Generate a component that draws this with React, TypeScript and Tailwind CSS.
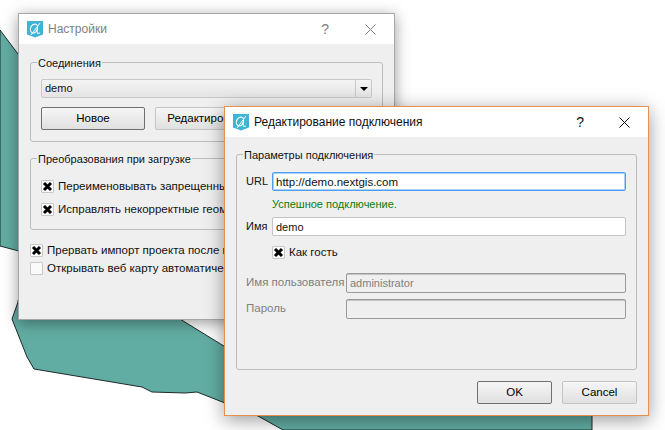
import React from 'react'

const FONT = "font-['Liberation_Sans',sans-serif]"

const Logo = () => (
  <svg width="16" height="17" viewBox="0 0 16 17">
    <path d="M0 0H16V13.5L8 16.5L0 13.5Z" fill="#3fb4d6" />
    <ellipse cx="7" cy="7.5" rx="3.4" ry="4.6" transform="rotate(25 7 7.5)" fill="none" stroke="#fff" strokeWidth="1.1" />
    <path d="M4 14L13 2M10.5 6C10 9 10 11 10.5 12.5L13 12" fill="none" stroke="#fff" strokeWidth="1" />
  </svg>
)

const CloseIcon = ({ color }: { color: string }) => (
  <svg width="11" height="11" viewBox="0 0 11 11">
    <path d="M0.5 0.5L10.5 10.5M10.5 0.5L0.5 10.5" stroke={color} strokeWidth="1" />
  </svg>
)

const Check = ({ checked = true }: { checked?: boolean }) => (
  <span className="flex h-[13px] w-[13px] shrink-0 items-center justify-center rounded-[1px] border border-[#c8c8c8] bg-[#fafafa]">
    {checked && (
      <svg width="11" height="11" viewBox="0 0 11 11">
        <path d="M2 2L9 9M9 2L2 9" stroke="#000" strokeWidth="3" />
      </svg>
    )}
  </span>
)

const Button = ({ label, primary, className }: { label: string; primary?: boolean; className: string }) => (
  <button
    className={`flex h-[23px] items-center justify-center overflow-hidden whitespace-nowrap rounded-[2px] border bg-linear-to-b from-[#f6f6f6] to-[#e0e0e0] text-[11.5px] text-black ${
      primary ? 'border-[#6f6f6f]' : 'border-[#c4c4c4]'
    } ${className}`}
  >
    {label}
  </button>
)

const Group = ({ title, className, children }: { title: string; className: string; children: React.ReactNode }) => (
  <fieldset className={`rounded-[3px] border border-[#bcbcbc] ${className}`}>
    <legend className="ml-[6px] h-[16px] px-[1px] text-[11px] leading-[18px] text-[#111]">{title}</legend>
    {children}
  </fieldset>
)

const CheckRow = ({ label, checked }: { label: string; checked?: boolean }) => (
  <div className="flex h-[13px] items-center gap-[4px] whitespace-nowrap text-[11.5px] text-[#111]">
    <Check checked={checked} />
    <span>{label}</span>
  </div>
)

const Field = ({ value, className }: { value: string; className: string }) => (
  <input readOnly value={value} className={`rounded-[2px] px-[3px] outline-none ${className}`} />
)

const MapBackground = () => (
  <svg className="absolute inset-0" width="665" height="430" viewBox="0 0 665 430">
    <path d="M0 30L60 110V262L0 246Z" fill="#62ada3" stroke="#1d2b29" strokeWidth="1" />
    <path
      d="M18 302L12 319L27 357L34 369L142 387L152 392L185 393L197 392L258 416L283 430H592V300H18Z"
      fill="#62ada3"
      stroke="#1d2b29"
      strokeWidth="1"
    />
    <path d="M180 319L240 356V300H180Z" fill="#fff" />
    <path d="M180 319L240 356" fill="none" stroke="#1d2b29" strokeWidth="1" />
  </svg>
)

const SettingsWindow = () => (
  <div className="absolute left-[18px] top-[13px] flex h-[307px] w-[377px] flex-col border border-[#a6a6a6] bg-[#efefef] shadow-[0_3px_14px_rgba(0,0,0,0.4)]">
    <div className="flex h-[30px] shrink-0 items-center bg-white pl-[8px] text-[#808080]">
      <Logo />
      <span className="ml-[5px] text-[12px]">Настройки</span>
      <span className="ml-auto mr-[36px] text-[14px]">?</span>
      <span className="mr-[18px]">
        <CloseIcon color="#808080" />
      </span>
    </div>
    <div className="flex flex-col pl-[11px] pr-[12px] pt-[10px]">
      <Group title="Соединения" className="h-[88px]">
        <div className="flex flex-col gap-[9px] px-[10px] pt-[9px]">
          <div className="flex h-[19px] w-[331px] items-center rounded-[2px] border border-[#c8c8c8] bg-linear-to-b from-[#f4f4f4] to-[#e4e4e4] pl-[3px] text-[11px] text-[#111]">
            <span className="flex-1">demo</span>
            <span className="flex h-full w-[16px] items-center justify-center border-l border-[#c8c8c8]">
              <span className="h-0 w-0 border-x-[4px] border-t-[4px] border-x-transparent border-t-black" />
            </span>
          </div>
          <div className="flex gap-[10px]">
            <Button label="Новое" primary className="w-[104px]" />
            <Button label="Редактировать" className="w-[104px]" />
          </div>
        </div>
      </Group>
      <Group title="Преобразования при загрузке" className="mt-[8px] h-[80px]">
        <div className="flex flex-col gap-[10px] px-[10px] pt-[14px]">
          <CheckRow label="Переименовывать запрещенные поля" />
          <CheckRow label="Исправлять некорректные геометрии" />
        </div>
      </Group>
      <div className="mt-[14px] flex flex-col gap-[5px]">
        <CheckRow label="Прервать импорт проекта после первой ошибки" />
        <CheckRow label="Открывать веб карту автоматически" checked={false} />
      </div>
    </div>
  </div>
)

const EditDialog = () => (
  <div className="absolute left-[224px] top-[106px] flex h-[310px] w-[425px] flex-col border border-[#e8914f] bg-[#efefef] shadow-[0_4px_18px_rgba(0,0,0,0.4)]">
    <div className="flex h-[30px] shrink-0 items-center bg-white pl-[8px] text-[#111]">
      <Logo />
      <span className="ml-[5px] text-[12px]">Редактирование подключения</span>
      <span className="ml-auto mr-[35px] text-[14px]">?</span>
      <span className="mr-[18px]">
        <CloseIcon color="#111" />
      </span>
    </div>
    <div className="flex flex-1 flex-col px-[11px] pt-[9px]">
      <Group title="Параметры подключения" className="h-[224px] text-[11.5px]">
        <div className="flex flex-col px-[9px] pt-[10px]">
          <div className="flex items-center">
            <span className="w-[26px] text-[11px] text-[#111]">URL</span>
            <Field
              value="http://demo.nextgis.com"
              className="h-[19px] w-[354px] border border-[#4f9cf0] bg-white text-[11.5px] text-[#111] shadow-[inset_0_0_0_1px_#a8d0f8]"
            />
          </div>
          <div className="mt-[5px] pl-[26px] text-[11px] leading-[17px] text-[#0a7a0a]">Успешное подключение.</div>
          <div className="mt-[4px] flex items-center">
            <span className="w-[26px] text-[11px] text-[#111]">Имя</span>
            <Field value="demo" className="h-[19px] w-[354px] border border-[#c4c4c4] bg-white text-[11px] text-[#111]" />
          </div>
          <div className="ml-[26px] mt-[10px]">
            <CheckRow label="Как гость" />
          </div>
          <div className="mt-[14px] flex items-center">
            <span className="w-[100px] whitespace-nowrap text-[#808080]">Имя пользователя</span>
            <Field
              value="administrator"
              className="h-[20px] w-[280px] border border-[#9a9a9a] bg-[#efefef] text-[11px] text-[#808080] shadow-[inset_0_1px_0_#c4c4c4]"
            />
          </div>
          <div className="mt-[6px] flex items-center">
            <span className="w-[100px] text-[#808080]">Пароль</span>
            <Field value="" className="h-[20px] w-[280px] border border-[#9a9a9a] bg-[#efefef] shadow-[inset_0_1px_0_#c4c4c4]" />
          </div>
        </div>
      </Group>
      <div className="mt-[11px] flex justify-end gap-[10px]">
        <Button label="OK" primary className="w-[75px]" />
        <Button label="Cancel" className="w-[75px]" />
      </div>
    </div>
  </div>
)

export default function App() {
  return (
    <div className={`relative h-[430px] w-[665px] overflow-hidden bg-white ${FONT}`}>
      <MapBackground />
      <SettingsWindow />
      <EditDialog />
    </div>
  )
}
